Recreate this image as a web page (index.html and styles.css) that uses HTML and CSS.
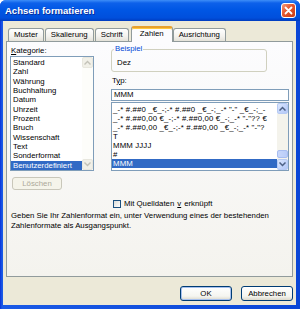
FILE: index.html
```html
<!DOCTYPE html>
<html lang="de">
<head>
    <meta charset="UTF-8">
    <meta name="viewport" content="width=device-width, initial-scale=1.0">
    <title>Achsen formatieren</title>
    <link rel="stylesheet" href="styles.css">
</head>
<body>
    <div class="window">
        <div class="titlebar">
            <span class="title">Achsen formatieren</span>
            <button class="close">
                <svg width="9" height="9" viewBox="0 0 9 9"><path d="M1.5 1.5 L7.5 7.5 M7.5 1.5 L1.5 7.5" stroke="#fff" stroke-width="1.8" stroke-linecap="round"/></svg>
            </button>
        </div>
        <div class="frame">
            <div class="tabs">
                <div class="tab">Muster</div>
                <div class="tab">Skalierung</div>
                <div class="tab">Schrift</div>
                <div class="tab active">Zahlen</div>
                <div class="tab">Ausrichtung</div>
            </div>
            <div class="panel">
                <div class="cols">
                    <div class="col-left">
                        <div class="label"><u>K</u>ategorie:</div>
                        <div class="listbox cat-list">
                            <ul>
                                <li>Standard</li>
                                <li>Zahl</li>
                                <li>Währung</li>
                                <li>Buchhaltung</li>
                                <li>Datum</li>
                                <li>Uhrzeit</li>
                                <li>Prozent</li>
                                <li>Bruch</li>
                                <li>Wissenschaft</li>
                                <li>Text</li>
                                <li>Sonderformat</li>
                                <li class="selected">Benutzerdefiniert</li>
                            </ul>
                            <div class="scrollbar off">
                                <span class="arrow"><svg width="7" height="5" viewBox="0 0 7 5"><path d="M0.5 4.5 L3.5 1.5 L6.5 4.5" fill="none" stroke="#c3c2b8" stroke-width="1.4"/></svg></span>
                                <span class="track"></span>
                                <span class="arrow"><svg width="7" height="5" viewBox="0 0 7 5"><path d="M0.5 0.5 L3.5 3.5 L6.5 0.5" fill="none" stroke="#c3c2b8" stroke-width="1.4"/></svg></span>
                            </div>
                        </div>
                        <button class="btn disabled">Löschen</button>
                    </div>
                    <div class="col-right">
                        <fieldset class="sample">
                            <legend>Beispiel</legend>
                            <div class="sample-value">Dez</div>
                        </fieldset>
                        <div class="label type-label">T<u>y</u>p:</div>
                        <div class="textbox">MMM</div>
                        <div class="listbox fmt-list">
                            <ul>
                                <li>_-* #.##0 _€_-;-* #.##0 _€_-;_-* "-" _€_-;_-</li>
                                <li>_-* #.##0,00 €_-;-* #.##0,00 €_-;_-* "-"?? €</li>
                                <li>_-* #.##0,00 _€_-;-* #.##0,00 _€_-;_-* "-"?</li>
                                <li>T</li>
                                <li>MMM JJJJ</li>
                                <li>#</li>
                                <li class="selected">MMM</li>
                            </ul>
                            <div class="scrollbar">
                                <span class="arrow"><svg width="7" height="5" viewBox="0 0 7 5"><path d="M0.5 4.5 L3.5 1.5 L6.5 4.5" fill="none" stroke="#4d6185" stroke-width="1.5"/></svg></span>
                                <span class="track"><span class="thumb"></span></span>
                                <span class="arrow"><svg width="7" height="5" viewBox="0 0 7 5"><path d="M0.5 0.5 L3.5 3.5 L6.5 0.5" fill="none" stroke="#4d6185" stroke-width="1.5"/></svg></span>
                            </div>
                        </div>
                    </div>
                </div>
                <label class="check"><span class="box"></span>Mit Quelldaten <u>v</u>erknüpft</label>
                <p class="hint">Geben Sie Ihr Zahlenformat ein, unter Verwendung eines der bestehenden Zahlenformate als Ausgangspunkt.</p>
            </div>
            <div class="actions">
                <button class="btn default">OK</button>
                <button class="btn">Abbrechen</button>
            </div>
        </div>
    </div>
</body>
</html>
```

FILE: styles.css
```css
*{box-sizing:border-box;margin:0;padding:0;}
body{width:300px;height:309px;overflow:hidden;font-family:'Liberation Sans', Arial, sans-serif;font-size:7.8px;color:#000;}
ul{list-style:none;}
u{text-decoration:underline;}

.window{display:flex;flex-direction:column;width:300px;height:309px;background:linear-gradient(90deg,#0831d9,#1a5ae6 2px,#0a46d6);border-radius:6px 6px 0 0;}
.titlebar{display:flex;align-items:center;justify-content:space-between;height:21px;padding:0 4px 0 5px;border-radius:6px 6px 0 0;background:linear-gradient(#3e8ef8 0,#0d61ea 3px,#0057e5 45%,#004fdc 85%,#003cbf 100%);}
.title{color:#fff;font-size:9.5px;font-weight:bold;text-shadow:1px 1px 0 #0b2e9c;}
.close{display:flex;align-items:center;justify-content:center;width:15px;height:15px;border:1px solid #fff;border-radius:3px;background:linear-gradient(135deg,#f39a7c,#e5552d 45%,#c83d16);}

.frame{flex:1;display:flex;flex-direction:column;margin:0 4px 4px 3px;padding:5px 3px 4px;background:#ece9d8;}

.tabs{position:relative;z-index:1;display:flex;align-items:flex-end;height:15px;padding-left:2px;}
.tab{height:13px;margin-right:1px;padding:0 5px;line-height:12px;border:1px solid #919b9c;border-bottom:0;border-radius:3px 3px 0 0;background:linear-gradient(#fff,#f3f2ee 60%,#e4e2d9);}
.tab.active{height:16px;margin:0 0 -1px 1px;padding:0 8px;border-top:2px solid #e8a02e;background:#fcfcfe;box-shadow:inset 0 1px 0 #ffc73d;}

.panel{height:236px;padding:2px 3px 0;border:1px solid #919b9c;background:linear-gradient(#fcfcfe,#f4f3ee);}
.cols{display:flex;gap:17px;}
.col-left{display:flex;flex-direction:column;width:84px;}
.col-right{display:flex;flex-direction:column;width:178px;}
.label{height:10px;padding-left:1px;line-height:10px;}
.col-left .label{margin-top:2px;}

.listbox{display:flex;border:1px solid #7f9db9;background:#fff;}
.listbox ul{flex:1;overflow:hidden;}
.listbox li{white-space:nowrap;}
.listbox li.selected{background:#316ac5;color:#fff;}
.cat-list{height:115px;}
.cat-list ul{padding-top:1px;}
.cat-list li{height:9.33px;padding-left:2px;line-height:9.33px;}
.fmt-list{height:69px;margin-top:1px;}
.fmt-list ul{padding-top:2px;}
.fmt-list li{height:9px;padding-left:1px;line-height:9px;letter-spacing:0.15px;}

.scrollbar{display:flex;flex-direction:column;width:11px;background:#f4f3ec;}
.scrollbar .arrow{display:flex;align-items:center;justify-content:center;height:11px;border:1px solid #b7cbf5;border-radius:2px;background:linear-gradient(135deg,#dde8fe,#c1d3fb 60%,#b4c8f6);}
.scrollbar .track{flex:1;display:flex;flex-direction:column;justify-content:flex-end;padding-bottom:1px;}
.scrollbar .thumb{height:8px;border:1px solid #a8bdf0;border-radius:2px;background:linear-gradient(90deg,#c8d7fb,#b9ccf8);}
.scrollbar.off{background:#fdfdfa;}
.scrollbar.off .arrow{border-color:#e8e7de;background:#f1f0e8;}

.btn{width:52px;height:15px;border:1px solid #003c74;border-radius:3px;background:linear-gradient(#fff,#f5f5f0 70%,#dcd8cc);font:inherit;color:#000;}
.btn.default{box-shadow:inset 0 0 0 1px #a6c0ee;}
.btn.disabled{width:50px;height:13px;margin:6px 0 0 2px;border-color:#c9c7ba;background:#f5f4ea;color:#aca899;}

.sample{width:156px;height:28px;padding:0 4px 4px 5px;border:1px solid #d0d0bf;border-radius:3px;}
.sample legend{margin-left:-3px;padding:0 1px;line-height:10px;color:#0046d5;}
.sample-value{padding-top:4px;line-height:9px;}
.type-label{margin-top:4px;}
.textbox{height:12px;margin-top:3px;padding-left:2px;line-height:10px;border:1px solid #7f9db9;background:#fff;}

.check{display:flex;align-items:center;gap:3px;height:10px;margin:9px 0 0 103px;line-height:10px;}
.check .box{width:8px;height:8px;border:1px solid #1c5180;background:linear-gradient(135deg,#dcdcd7,#fff);}
.hint{margin-top:2px;padding-left:1px;line-height:10px;}

.actions{display:flex;justify-content:flex-end;gap:9px;margin-top:9px;}
```
